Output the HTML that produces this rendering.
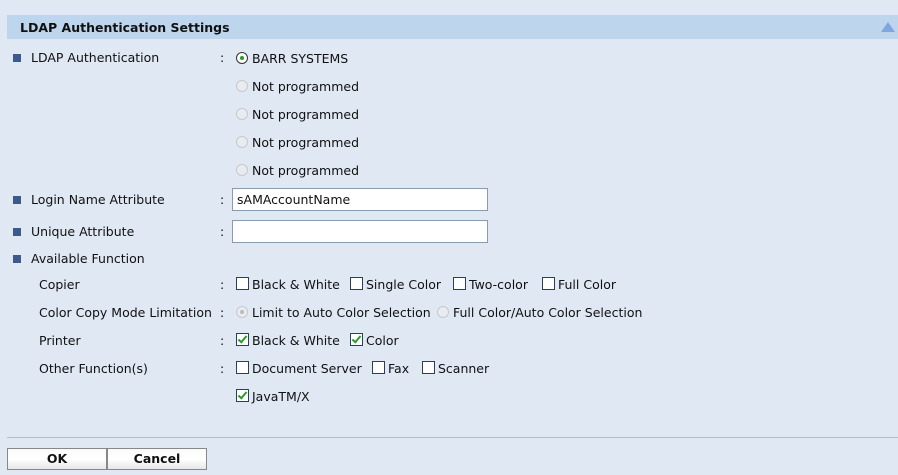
<!DOCTYPE html>
<html><head><meta charset="utf-8"><style>
body{margin:0;width:898px;height:475px;background:#dfe8f3;font-family:"DejaVu Sans","Liberation Sans",sans-serif;font-size:12.5px;color:#111;position:relative;overflow:hidden}
.a{position:absolute;white-space:nowrap}
.hdr{position:absolute;left:7px;top:15px;width:891px;height:24px;background:#bdd6ed}
.hdr b{position:absolute;left:13px;top:5px;font-size:12.5px}
.tri{position:absolute;left:881px;top:22px;width:0;height:0;border-left:7px solid transparent;border-right:7px solid transparent;border-bottom:10px solid #7ea6e0}
.bul{position:absolute;left:13px;width:8px;height:8px;background:#3c5a8c}
.rd{position:absolute;width:12px;height:12px;border-radius:50%;border:1px solid #c8c8c8;background:#e8ecf0;box-sizing:border-box}
.rd.on{border-color:#333;background:#fff}
.rd.on:after{content:"";position:absolute;left:3px;top:3px;width:4px;height:4px;border-radius:50%;background:#2a9a2a}
.rd.dis:after{content:"";position:absolute;left:3px;top:3px;width:4px;height:4px;border-radius:50%;background:#bbb}
.cb{position:absolute;width:13px;height:13px;border:1px solid #2c3e5a;background:#fff;box-sizing:border-box}
.cb.on:after{content:"";position:absolute;left:3px;top:0px;width:3px;height:7px;border:solid #2a9a2a;border-width:0 2px 2px 0;transform:rotate(40deg)}
.in{position:absolute;left:232px;width:256px;height:23px;border:1px solid #8a9ab0;background:#fff;box-sizing:border-box;padding:3px 4px;font-size:12.5px}
.hr{position:absolute;left:7px;top:437px;width:891px;height:1px;background:#b8bcc4}
.btn{position:absolute;top:448px;height:22px;width:100px;border:1px solid #888;box-sizing:border-box;background:linear-gradient(#fafafa,#fff 50%,#e6e6e6);font-weight:bold;text-align:center;line-height:20px;font-size:12.5px}
</style></head><body>
<div class="hdr"><b>LDAP Authentication Settings</b></div><div class="tri"></div>

<div class="bul" style="top:54px"></div><div class="a" style="left:31px;top:50px">LDAP Authentication</div><div class="a" style="left:220px;top:50px">:</div>
<div class="rd on" style="left:236px;top:52px"></div><div class="a" style="left:252px;top:51px">BARR SYSTEMS</div>
<div class="rd" style="left:236px;top:80px"></div><div class="a" style="left:252px;top:79px">Not programmed</div>
<div class="rd" style="left:236px;top:108px"></div><div class="a" style="left:252px;top:107px">Not programmed</div>
<div class="rd" style="left:236px;top:136px"></div><div class="a" style="left:252px;top:135px">Not programmed</div>
<div class="rd" style="left:236px;top:164px"></div><div class="a" style="left:252px;top:163px">Not programmed</div>

<div class="bul" style="top:196px"></div><div class="a" style="left:31px;top:192px">Login Name Attribute</div><div class="a" style="left:220px;top:192px">:</div>
<div class="in" style="top:188px">sAMAccountName</div>
<div class="bul" style="top:228px"></div><div class="a" style="left:31px;top:224px">Unique Attribute</div><div class="a" style="left:220px;top:224px">:</div>
<div class="in" style="top:220px"></div>
<div class="bul" style="top:255px"></div><div class="a" style="left:31px;top:251px">Available Function</div>

<div class="a" style="left:39px;top:277px">Copier</div><div class="a" style="left:220px;top:277px">:</div>
<div class="cb" style="left:236px;top:277px"></div><div class="a" style="left:252px;top:277px">Black &amp; White</div>
<div class="cb" style="left:350px;top:277px"></div><div class="a" style="left:366px;top:277px">Single Color</div>
<div class="cb" style="left:453px;top:277px"></div><div class="a" style="left:469px;top:277px">Two-color</div>
<div class="cb" style="left:542px;top:277px"></div><div class="a" style="left:558px;top:277px">Full Color</div>

<div class="a" style="left:39px;top:305px">Color Copy Mode Limitation</div><div class="a" style="left:220px;top:305px">:</div>
<div class="rd dis" style="left:236px;top:306px"></div><div class="a" style="left:252px;top:305px">Limit to Auto Color Selection</div>
<div class="rd" style="left:437px;top:306px"></div><div class="a" style="left:453px;top:305px">Full Color/Auto Color Selection</div>

<div class="a" style="left:39px;top:333px">Printer</div><div class="a" style="left:220px;top:333px">:</div>
<div class="cb on" style="left:236px;top:333px"></div><div class="a" style="left:252px;top:333px">Black &amp; White</div>
<div class="cb on" style="left:350px;top:333px"></div><div class="a" style="left:366px;top:333px">Color</div>

<div class="a" style="left:39px;top:361px">Other Function(s)</div><div class="a" style="left:220px;top:361px">:</div>
<div class="cb" style="left:236px;top:361px"></div><div class="a" style="left:252px;top:361px">Document Server</div>
<div class="cb" style="left:372px;top:361px"></div><div class="a" style="left:388px;top:361px">Fax</div>
<div class="cb" style="left:422px;top:361px"></div><div class="a" style="left:438px;top:361px">Scanner</div>
<div class="cb on" style="left:236px;top:389px"></div><div class="a" style="left:252px;top:389px">JavaTM/X</div>

<div class="hr"></div>
<div class="btn" style="left:7px">OK</div>
<div class="btn" style="left:107px">Cancel</div>
</body></html>
